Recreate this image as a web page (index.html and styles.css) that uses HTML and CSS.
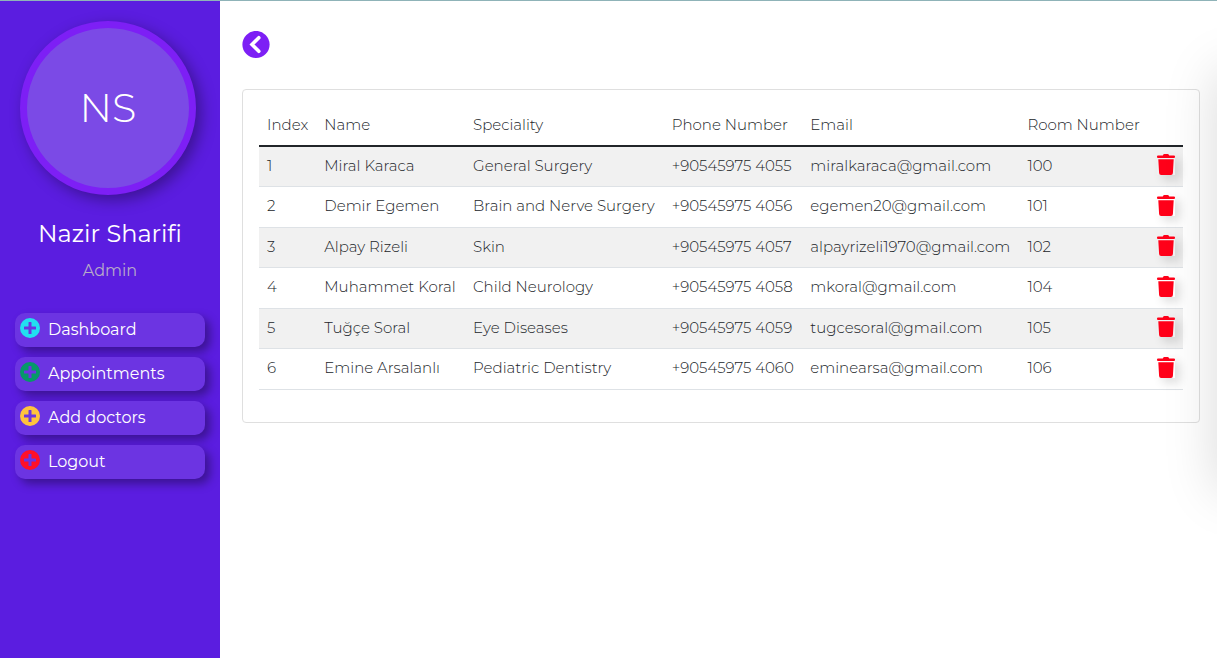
FILE: index.html
```html
<!DOCTYPE html>
<html lang="en">
<head>
<meta charset="utf-8">
<meta name="viewport" content="width=device-width, initial-scale=1">
<title>Doctors</title>
<link rel="stylesheet" href="styles.css">
</head>
<body>
<svg class="sprite" aria-hidden="true">
  <symbol id="plus" viewBox="0 0 20 20"><path fill="currentColor" fill-rule="evenodd" d="M10 0a10 10 0 1 0 0 20 10 10 0 0 0 0-20ZM9 4h2q.5 0 .5.5v4h4q.5 0 .5.5v2q0 .5-.5.5h-4v4q0 .5-.5.5H9q-.5 0-.5-.5v-4h-4Q4 11.500 4 11V9q0-.5.5-.5h4v-4Q8.500 4 9 4Z"/></symbol>
  <symbol id="trash" viewBox="0 0 18 21"><path fill="currentColor" d="M1 1.500h4.800L6.300.6Q6.600 0 7.300 0h3.400q.7 0 1 .6l.5.9H17q1 0 1 1V3q0 1-1 1H1Q0 4 0 3v-.5q0-1 1-1ZM1.300 5.200h15.400l-.8 13.900q-.1 1.900-2 1.900H4.100q-1.900 0-2-1.900Z"/></symbol>
</svg>
<div class="app">
  <aside class="sidebar">
    <div class="avatar">NS</div>
    <h1 class="user-name">Nazir Sharifi</h1>
    <p class="user-role">Admin</p>
    <nav class="menu">
      <a class="menu-item" href="#"><svg class="menu-icon cyan"><use href="#plus"/></svg>Dashboard</a>
      <a class="menu-item" href="#"><svg class="menu-icon green"><use href="#plus"/></svg>Appointments</a>
      <a class="menu-item" href="#"><svg class="menu-icon yellow"><use href="#plus"/></svg>Add doctors</a>
      <a class="menu-item" href="#"><svg class="menu-icon red"><use href="#plus"/></svg>Logout</a>
    </nav>
  </aside>
  <main class="content">
    <button class="back" type="button" aria-label="Back">
      <svg class="back-icon" viewBox="0 0 28 28"><circle cx="14" cy="13.500" r="13.600" fill="#7d1ff5"/><path d="M16.800 6.700 10 13.500l6.800 6.800" fill="none" stroke="#fff" stroke-width="3.600" stroke-linecap="round" stroke-linejoin="miter"/></svg>
    </button>
    <section class="card">
      <table class="doctors">
        <colgroup><col class="c-index"><col class="c-name"><col class="c-spec"><col class="c-phone"><col class="c-email"><col class="c-room"><col class="c-action"></colgroup>
        <thead>
          <tr><th>Index</th><th>Name</th><th>Speciality</th><th>Phone Number</th><th>Email</th><th>Room Number</th><th></th></tr>
        </thead>
        <tbody>
          <tr><td>1</td><td>Miral Karaca</td><td>General Surgery</td><td>+90545975 4055</td><td>miralkaraca@gmail.com</td><td>100</td><td><button class="delete" type="button" aria-label="Delete"><svg class="trash"><use href="#trash"/></svg></button></td></tr>
          <tr><td>2</td><td>Demir Egemen</td><td>Brain and Nerve Surgery</td><td>+90545975 4056</td><td>egemen20@gmail.com</td><td>101</td><td><button class="delete" type="button" aria-label="Delete"><svg class="trash"><use href="#trash"/></svg></button></td></tr>
          <tr><td>3</td><td>Alpay Rizeli</td><td>Skin</td><td>+90545975 4057</td><td>alpayrizeli1970@gmail.com</td><td>102</td><td><button class="delete" type="button" aria-label="Delete"><svg class="trash"><use href="#trash"/></svg></button></td></tr>
          <tr><td>4</td><td>Muhammet Koral</td><td>Child Neurology</td><td>+90545975 4058</td><td>mkoral@gmail.com</td><td>104</td><td><button class="delete" type="button" aria-label="Delete"><svg class="trash"><use href="#trash"/></svg></button></td></tr>
          <tr><td>5</td><td>Tuğçe Soral</td><td>Eye Diseases</td><td>+90545975 4059</td><td>tugcesoral@gmail.com</td><td>105</td><td><button class="delete" type="button" aria-label="Delete"><svg class="trash"><use href="#trash"/></svg></button></td></tr>
          <tr><td>6</td><td>Emine Arsalanlı</td><td>Pediatric Dentistry</td><td>+90545975 4060</td><td>eminearsa@gmail.com</td><td>106</td><td><button class="delete" type="button" aria-label="Delete"><svg class="trash"><use href="#trash"/></svg></button></td></tr>
        </tbody>
      </table>
    </section>
    <div class="drawer" aria-hidden="true"></div>
  </main>
</div>
</body>
</html>
```

FILE: styles.css
```css
* { box-sizing: border-box; }

body {
  margin: 0;
  font-family: Montserrat, Inter, "Liberation Sans", sans-serif;
  font-size: 15px;
  font-weight: 300;
  line-height: 24px;
  color: #212529;
  background: #fff;
}

.sprite { display: none; }

.app {
  display: flex;
  min-height: 100vh;
  border-top: 1px solid #8fb3b8;
}

/* Sidebar */
.sidebar {
  flex: 0 0 220px;
  display: flex;
  flex-direction: column;
  padding: 20px 15px;
  background: #5b1de0;
  color: #fff;
}

.avatar {
  display: flex;
  align-items: center;
  justify-content: center;
  width: 176px;
  height: 174px;
  margin-left: 5px;
  border: 7px solid #7d1ff5;
  border-radius: 50%;
  background: #7b4ae6;
  box-shadow: 5px 5px 15px rgba(0, 0, 0, 0.35);
  font-size: 40px;
}

.user-name {
  margin: 24px 0 0;
  font-size: 24px;
  font-weight: 400;
  line-height: 30px;
  text-align: center;
}

.user-role {
  margin: 10px 0 0;
  font-size: 16px;
  font-weight: 400;
  line-height: 24px;
  text-align: center;
  color: #b8abc8;
}

.menu {
  display: flex;
  flex-direction: column;
  gap: 10px;
  margin-top: 30px;
}

.menu-item {
  display: flex;
  align-items: center;
  gap: 8px;
  height: 34px;
  padding: 0 5px;
  border-radius: 10px;
  background: #6c34e2;
  box-shadow: 5px 5px 10px rgba(0, 0, 0, 0.35);
  color: #fff;
  font-size: 16px;
  font-weight: 400;
  text-decoration: none;
}

.menu-icon {
  width: 20px;
  height: 20px;
  margin-bottom: 4px;
}

.cyan { color: #22dff0; }
.green { color: #069868; }
.yellow { color: #ffc33d; }
.red { color: #ff1028; }

/* Content */
.content {
  position: relative;
  flex: 1;
  min-width: 0;
  padding: 30px 17px 30px 22px;
  overflow: hidden;
}

.back {
  display: block;
  width: 28px;
  height: 28px;
  padding: 0;
  border: 0;
  background: none;
  cursor: pointer;
}

.back-icon {
  display: block;
  width: 28px;
  height: 28px;
}

.card {
  margin-top: 30px;
  padding: 16px 16px 32px;
  border: 1px solid #dfdfdf;
  border-radius: 4px;
}

.doctors {
  width: 100%;
  border-spacing: 0;
  table-layout: fixed;
}

.c-index { width: 6.200%; }
.c-name { width: 16.100%; }
.c-spec { width: 21.500%; }
.c-phone { width: 15%; }
.c-email { width: 23.500%; }
.c-room { width: 14%; }

.doctors th,
.doctors td {
  height: 40px;
  padding: 0 0 2px 8px;
  border-bottom: 1px solid #dee2e6;
  font-weight: 300;
  text-align: left;
  white-space: nowrap;
}

.doctors th {
  height: 41px;
  border-bottom: 2px solid #212529;
}

.doctors tbody tr:nth-child(odd) td { background: #f1f1f1; }
.doctors tbody tr:nth-child(even) td { height: 41px; }

.doctors td:last-child { padding-bottom: 4px; }

.delete {
  display: block;
  padding: 0;
  border: 0;
  background: none;
  box-shadow: 5px 5px 10px rgba(0, 0, 0, 0.12);
  color: #ff0019;
  cursor: pointer;
}

.trash {
  display: block;
  width: 18px;
  height: 21px;
}

/* Closed panel waiting beyond the right edge */
.drawer {
  position: absolute;
  top: 70px;
  left: 100%;
  width: 300px;
  height: 420px;
  box-shadow: 0 0 50px rgba(0, 0, 0, 0.15);
}
```
